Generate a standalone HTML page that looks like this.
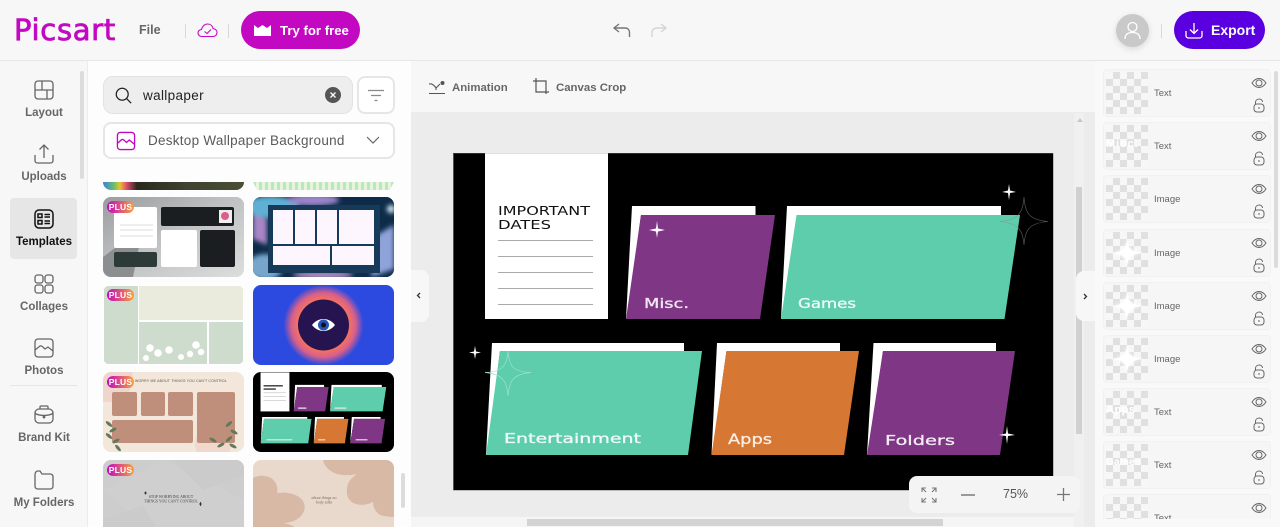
<!DOCTYPE html>
<html><head><meta charset="utf-8">
<style>
*{box-sizing:border-box}
html,body{margin:0;padding:0;width:1280px;height:527px;overflow:hidden;background:#f7f7f7;font-family:"Liberation Sans",sans-serif}
#w{position:relative;width:1280px;height:527px;overflow:hidden}
.a{position:absolute}
.t{position:absolute;white-space:nowrap}
.nav{position:absolute;width:68px;left:10px;text-align:center;font-size:11.5px;font-weight:700;color:#666;line-height:14px}
.th{position:absolute;width:141px;height:80px;border-radius:8px;overflow:hidden}
.th svg{position:absolute;left:0;top:0;filter:blur(.35px)}
.plus{position:absolute;left:4px;top:4px;width:27px;height:12px;border-radius:6px;background:linear-gradient(90deg,#c209c1,#f9a13a);color:#fff;font-size:8.5px;font-weight:700;line-height:12px;text-align:center;letter-spacing:.2px}
.ly{position:absolute;left:1103px;width:168px;height:48px;background:#f6f6f6;border:1px solid #f1f1f1;border-radius:4px}
.ck{position:absolute;left:2px;top:2px;width:42px;height:42px;background-color:#f7f7f7;background-image:linear-gradient(45deg,#e0e0e0 25%,transparent 25%,transparent 75%,#e0e0e0 75%),linear-gradient(45deg,#e0e0e0 25%,transparent 25%,transparent 75%,#e0e0e0 75%);background-size:14px 14px;background-position:0 0,7px 7px}
.lt{position:absolute;left:50px;top:18px;font-size:9.5px;line-height:12px;color:#666}
.lb{position:absolute;left:2px;top:15px;white-space:nowrap;color:#fff;font-weight:700}
.ly>svg{position:absolute;left:146px;top:5px}
.st{position:absolute;left:0;top:0;filter:drop-shadow(0 0 2px #fff)}
</style></head><body><div id="w">

<!-- header -->
<div class="a" style="left:0;top:0;width:1280px;height:61px;background:#f7f7f7;border-bottom:1px solid #e6e6e6"></div>
<div class="t" style="left:14px;top:12px;font-size:29px;line-height:36px;color:#c209c1;letter-spacing:.7px;font-family:'DejaVu Sans',sans-serif;-webkit-text-stroke:.8px #c209c1">Picsart</div>
<div class="t" style="left:139px;top:23px;font-size:12.5px;font-weight:700;color:#666;line-height:15px">File</div>
<div class="a" style="left:185px;top:24px;width:1px;height:14px;background:#d8d8d8"></div>
<svg class="a" style="left:197px;top:22px" width="21" height="16" viewBox="0 0 21 16" fill="none" stroke="#c209c1" stroke-width="1.1"><path d="M5 14.5C2.5 14.5 1 12.800 1 11C1 9 2.400 7.800 4.500 7.500C5 4.500 7.500 2 10.500 2C13.500 2 15.500 4 16 6.500C18.500 7 20 8.600 20 10.600C20 12.800 18.300 14.500 16 14.500Z"/><path d="M7.500 9.500L10 11.500L14 7.500"/></svg>
<div class="a" style="left:228px;top:24px;width:1px;height:14px;background:#d8d8d8"></div>
<div class="a" style="left:241px;top:11px;width:119px;height:38px;border-radius:19px;background:#c209c1"></div>
<svg class="a" style="left:254px;top:25px" width="17" height="11" viewBox="0 0 17 11"><path d="M0 0L4 3L8.500 0L13 3L17 0V11H0Z" fill="#fff"/></svg>
<div class="t" style="left:280px;top:23px;font-size:13.2px;font-weight:700;color:#fff;line-height:16px">Try for free</div>
<svg class="a" style="left:610px;top:20px" width="60" height="20" viewBox="0 0 60 20" fill="none" stroke-width="1.400"><path d="M9 4L4 8L9 12M4 8H15C18 8 19.500 10 19.500 12.500V17" stroke="#777"/><path d="M51 4L56 8L51 12M56 8H47C44 8 42 10 42 12.500V17" stroke="#d5d5d5"/></svg>
<div class="a" style="left:1116px;top:14px;width:33px;height:33px;border-radius:50%;background:#c9c9c9;box-shadow:0 2px 7px rgba(0,0,0,.12)"></div>
<svg class="a" style="left:1122px;top:20px" width="21" height="21" viewBox="0 0 21 21" fill="none" stroke="#fff" stroke-width="1.300"><circle cx="10.500" cy="7" r="4.500"/><path d="M3 19C3 14.500 6 12.500 10.500 12.500C15 12.500 18 14.500 18 19"/></svg>
<div class="a" style="left:1161px;top:24px;width:1px;height:14px;background:#d8d8d8"></div>
<div class="a" style="left:1174px;top:11px;width:91px;height:38px;border-radius:19px;background:#5a00e0"></div>
<svg class="a" style="left:1185px;top:22px" width="18" height="17" viewBox="0 0 18 17" fill="none" stroke="#fff" stroke-width="1.300"><path d="M9 1V11M5 7.500L9 11.500L13 7.500M1 9V13.500C1 15 2 16 3.500 16H14.500C16 16 17 15 17 13.500V9"/></svg>
<div class="t" style="left:1211px;top:22px;font-size:14px;font-weight:700;color:#fff;line-height:17px">Export</div>

<!-- left nav -->
<div class="a" style="left:0;top:61px;width:88px;height:466px;background:#f7f7f7;border-right:1px solid #ececec"></div>
<div class="a" style="left:80px;top:71px;width:4px;height:108px;background:#dcdcdc;border-radius:2px"></div>
<div class="a" style="left:10px;top:198px;width:67px;height:61px;background:#e6e6e6;border-radius:4px"></div>

<svg class="a" style="left:33px;top:79px" width="22" height="22" viewBox="0 0 22 22" fill="none" stroke="#666" stroke-width="1.300"><rect x="2" y="2" width="18" height="18" rx="3"/><path d="M2 11H20M9 2V11M14 11V20"/></svg>
<div class="nav" style="top:106px">Layout</div>
<svg class="a" style="left:33px;top:143px" width="22" height="22" viewBox="0 0 22 22" fill="none" stroke="#666" stroke-width="1.300"><path d="M11 2V15M6.500 6.500L11 2L15.500 6.500M2 12V17.500C2 19 3 20 4.500 20H17.500C19 20 20 19 20 17.500V12"/></svg>
<div class="nav" style="top:170px">Uploads</div>
<svg class="a" style="left:33px;top:208px" width="22" height="22" viewBox="0 0 22 22" fill="none" stroke="#111" stroke-width="1.500"><rect x="2" y="2" width="18" height="18" rx="4"/><rect x="5" y="6" width="4" height="3.500"/><rect x="5" y="12.500" width="4" height="3.500"/><path d="M11.500 6.500H17M11.500 9H17M11.500 13H17M11.500 15.500H17"/></svg>
<div class="nav" style="top:235px;color:#111">Templates</div>
<svg class="a" style="left:33px;top:273px" width="22" height="22" viewBox="0 0 22 22" fill="none" stroke="#666" stroke-width="1.300"><rect x="2" y="2" width="8" height="8" rx="2.500"/><rect x="12" y="2" width="8" height="8" rx="2.500"/><rect x="2" y="12" width="8" height="8" rx="2.500"/><rect x="12" y="12" width="8" height="8" rx="2.500"/></svg>
<div class="nav" style="top:300px">Collages</div>
<svg class="a" style="left:33px;top:337px" width="22" height="22" viewBox="0 0 22 22" fill="none" stroke="#666" stroke-width="1.300"><rect x="2" y="2" width="18" height="18" rx="3"/><path d="M2 13L7 9C9 8 10.500 11 12 12L15 10L20 14"/></svg>
<div class="nav" style="top:364px">Photos</div>
<div class="a" style="left:10px;top:385px;width:67px;height:1px;background:#e6e6e6"></div>
<svg class="a" style="left:33px;top:404px" width="22" height="22" viewBox="0 0 22 22" fill="none" stroke="#666" stroke-width="1.300"><rect x="2" y="5" width="18" height="14" rx="4"/><path d="M7 5V3C7 2.300 7.500 2 8 2H14C14.500 2 15 2.300 15 3V5M2 9.500C7 12 15 12 20 9.500"/><circle cx="11" cy="13" r=".8" fill="#666"/></svg>
<div class="nav" style="top:431px">Brand Kit</div>
<svg class="a" style="left:33px;top:469px" width="22" height="22" viewBox="0 0 22 22" fill="none" stroke="#666" stroke-width="1.300"><path d="M2 6V17C2 19 3 20 5 20H17C19 20 20 19 20 17V8C20 6 19 5 17 5H9L7 2H5C3 2 2 3.500 2 6Z"/></svg>
<div class="nav" style="top:496px">My Folders</div>

<!-- search panel -->
<div class="a" style="left:88px;top:61px;width:323px;height:466px;background:#fdfdfd"></div>
<div class="a" style="left:103px;top:76px;width:250px;height:38px;background:#eeeeee;border:1px solid #e2e2e2;border-radius:10px"></div>
<svg class="a" style="left:115px;top:87px" width="17" height="17" viewBox="0 0 20 20" fill="none" stroke="#222" stroke-width="1.500"><circle cx="8.500" cy="8.500" r="7"/><path d="M13.500 13.500L19 19"/></svg>
<div class="t" style="left:143px;top:88px;font-size:13.500px;letter-spacing:.35px;color:#222;line-height:16px">wallpaper</div>
<div class="a" style="left:325px;top:87px;width:16px;height:16px;border-radius:50%;background:#555"></div>
<svg class="a" style="left:325px;top:87px" width="16" height="16" fill="none" stroke="#fff" stroke-width="1.300"><path d="M5.500 5.500L10.500 10.500M10.500 5.500L5.500 10.500"/></svg>
<div class="a" style="left:357px;top:76px;width:38px;height:38px;background:#fff;border:2px solid #e6e6e6;border-radius:8px"></div>
<svg class="a" style="left:368px;top:89px" width="16" height="13" fill="none" stroke="#888" stroke-width="1.200"><path d="M0 1.500H16M3 6.500H13M6.500 11.500H9.500"/></svg>
<div class="a" style="left:103px;top:122px;width:292px;height:37px;background:#fff;border:2px solid #e6e6e6;border-radius:8px"></div>
<svg class="a" style="left:116px;top:131px" width="20" height="20" viewBox="0 0 21 21" fill="none" stroke="#c209c1" stroke-width="1.400"><rect x="1.500" y="1.500" width="18" height="18" rx="3"/><path d="M1.500 13L6 9C8 8 9.500 11 11 12L14 9.500L19.500 14"/></svg>
<div class="t" style="left:148px;top:133px;font-size:13.500px;color:#5a5a5a;line-height:16px;letter-spacing:.26px">Desktop Wallpaper Background</div>
<svg class="a" style="left:366px;top:136px" width="14" height="9" fill="none" stroke="#666" stroke-width="1.200"><path d="M1 1L7 7L13 1"/></svg>

<!-- thumbs top partial -->
<div class="a" style="left:103px;top:182px;width:141px;height:8px;border-radius:0 0 8px 8px;background:linear-gradient(90deg,#3a7fe0,#6cc06a 8%,#e8c22e 12%,#d84a6a 17%,#2a2a20 24%,#3e4230 60%,#4a4f34 100%)"></div>
<div class="a" style="left:253px;top:182px;width:141px;height:8px;background:repeating-linear-gradient(90deg,#b5e8c4 0 3px,#e8f5d8 3px 6px);clip-path:polygon(0 0,100% 0,97% 100%,3% 100%)"></div>

<div class="th" style="left:103px;top:197px;background:#c5c6c7">
<svg width="141" height="80"><defs><linearGradient id="g1" x1="0" y1="0" x2="1" y2="1"><stop offset="0" stop-color="#9a9c9e"/><stop offset=".45" stop-color="#bfc0c1"/><stop offset="1" stop-color="#dcdddd"/></linearGradient></defs><rect width="141" height="80" fill="url(#g1)"/><path d="M0 60L40 30L30 80H0Z" fill="#8c8e90"/><rect x="11" y="10" width="43" height="41" rx="2" fill="#fff"/><path d="M17 28H50M17 33H50M17 39H50" stroke="#ddd"/><rect x="58" y="10" width="73" height="19" rx="2" fill="#1a1e20"/><rect x="116" y="13" width="13" height="13" fill="#eee"/><circle cx="122" cy="19" r="4" fill="#d9608a"/><rect x="58" y="33" width="36" height="37" rx="2" fill="#fff"/><rect x="97" y="33" width="35" height="37" rx="2" fill="#1a1e20"/><rect x="11" y="55" width="43" height="15" rx="2" fill="#2c3a38"/></svg>
<div class="plus">PLUS</div></div>

<div class="th" style="left:253px;top:197px;background:#0e2c4a">
<svg width="141" height="80"><defs><filter id="b2"><feGaussianBlur stdDeviation="2.500"/></filter></defs><rect width="141" height="80" fill="#0e2c4a"/><g filter="url(#b2)"><ellipse cx="18" cy="10" rx="28" ry="11" fill="#5fb0d4"/><ellipse cx="60" cy="3" rx="26" ry="6" fill="#9a84c8"/><path d="M0 18L14 22V48L0 42Z" fill="#a986c6"/><ellipse cx="12" cy="70" rx="18" ry="13" fill="#76a6cc"/><path d="M124 38L141 28V72L118 80L122 60Z" fill="#8fa3da"/><ellipse cx="70" cy="78" rx="30" ry="4" fill="#b08cc0"/><circle cx="138" cy="12" r="4" fill="#d6ecf6"/></g><rect x="15" y="8" width="112" height="68" fill="#17395a"/><rect x="20" y="13" width="20" height="34" fill="#fef6fe"/><rect x="42" y="13" width="20" height="34" fill="#fef6fe"/><rect x="64" y="13" width="20" height="34" fill="#fef6fe"/><rect x="86" y="13" width="35" height="34" fill="#fef6fe"/><rect x="20" y="49" width="57" height="19" fill="#fef6fe"/><rect x="79" y="49" width="42" height="19" fill="#fef6fe"/></svg></div>

<div class="th" style="left:103px;top:285px;background:#fff">
<svg width="141" height="80"><rect x="1" y="1" width="34" height="78" fill="#cddccd"/><rect x="36" y="1" width="104" height="34" fill="#eaebdd"/><rect x="36" y="37" width="68" height="42" fill="#cddccd"/><rect x="106" y="37" width="34" height="42" fill="#cddccd"/><g fill="#fff"><circle cx="47" cy="63" r="3.800"/><circle cx="55" cy="68" r="3.800"/><circle cx="66" cy="65" r="3.800"/><circle cx="78" cy="72" r="3"/><circle cx="87" cy="69" r="3.200"/><circle cx="93" cy="60" r="3.800"/><circle cx="98" cy="67" r="3.200"/><circle cx="43" cy="73" r="3"/></g></svg>
<div class="plus">PLUS</div></div>

<div class="th" style="left:253px;top:285px;background:#2c4ae0">
<svg width="141" height="80"><defs><radialGradient id="g3"><stop offset=".62" stop-color="#f8745a"/><stop offset=".8" stop-color="#d8608a"/><stop offset="1" stop-color="#2c4ae0"/></radialGradient></defs><circle cx="70.500" cy="40" r="40" fill="url(#g3)"/><circle cx="70.500" cy="40" r="25.500" fill="#251450"/><path d="M59 40C65 32 76 32 82 40C76 48 65 48 59 40Z" fill="#fff"/><circle cx="70.500" cy="40" r="5.500" fill="#2454b8"/><circle cx="70.500" cy="40" r="2.500" fill="#111"/></svg></div>

<div class="th" style="left:103px;top:372px;background:#f3e6db">
<svg width="141" height="80"><circle cx="6" cy="6" r="24" fill="#f0d5cc"/><circle cx="110" cy="72" r="18" fill="#f0d8cd"/><rect x="9" y="20" width="25" height="24" rx="2" fill="#c08f7c"/><rect x="38" y="20" width="24" height="24" rx="2" fill="#c08f7c"/><rect x="65" y="20" width="25" height="24" rx="2" fill="#c08f7c"/><rect x="94" y="20" width="38" height="51" rx="2" fill="#c08f7c"/><rect x="9" y="48" width="81" height="23" rx="2" fill="#c08f7c"/><g fill="#62795a"><ellipse cx="6" cy="52" rx="4" ry="1.600" transform="rotate(40 6 52)"/><ellipse cx="10" cy="58" rx="4" ry="1.600" transform="rotate(-30 10 58)"/><ellipse cx="6" cy="64" rx="4" ry="1.600" transform="rotate(40 6 64)"/><ellipse cx="13" cy="69" rx="4" ry="1.600" transform="rotate(-30 13 69)"/><ellipse cx="15" cy="76" rx="4" ry="1.600" transform="rotate(50 15 76)"/><ellipse cx="126" cy="52" rx="4" ry="1.600" transform="rotate(-40 126 52)"/><ellipse cx="131" cy="60" rx="4" ry="1.600" transform="rotate(30 131 60)"/><ellipse cx="126" cy="67" rx="4" ry="1.600" transform="rotate(-40 126 67)"/><ellipse cx="130" cy="74" rx="4" ry="1.600" transform="rotate(30 130 74)"/><ellipse cx="110" cy="68" rx="4" ry="1.600" transform="rotate(30 110 68)"/><ellipse cx="118" cy="73" rx="4" ry="1.600" transform="rotate(-30 118 73)"/></g></svg>
<div class="plus">PLUS</div><div class="t" style="left:32px;top:7px;font-size:3.500px;color:#553;letter-spacing:.2px">WORRY ME ABOUT THINGS YOU CAN'T CONTROL</div></div>

<div class="th" style="left:253px;top:372px;background:#000">
<svg width="141" height="80" viewBox="453 153 600 337"><rect x="453" y="153" width="600" height="337" fill="#000"/><rect x="485" y="153" width="123" height="166" fill="#fff"/><path d="M498 240H593M498 256H593M498 272H593" stroke="#aaa" stroke-width="2"/><path d="M498 210H580M498 224H550" stroke="#333" stroke-width="6"/><path d="M632 206H755.500V215H641L627 319Z" fill="#fff"/><path d="M641 215H775L760 319H626Z" fill="#7f3685"/><path d="M787 206H1001V215H797L781 319Z" fill="#fff"/><path d="M796.500 215H1020L1004.500 319H781Z" fill="#5ecdac"/><path d="M492 343H684V351H500L486 455Z" fill="#fff"/><path d="M500 351H702L688 455H486Z" fill="#5ecdac"/><path d="M717 343H840V351H726.500L711.500 455Z" fill="#fff"/><path d="M726.500 351H859L844 455H711.500Z" fill="#d77734"/><path d="M873.500 343H996V351H883L867 455Z" fill="#fff"/><path d="M883 351H1015L1000 455H867Z" fill="#7f3685"/><path d="M510 440H620M730 440H760M890 440H940M645 305H680M800 305H850" stroke="#e8e8e8" stroke-width="5"/></svg></div>

<div class="th" style="left:103px;top:460px;background:#cfcfd0">
<svg width="141" height="80"><rect width="141" height="80" fill="#cdcdce"/><path d="M0 30L60 0L141 40V80H60Z" fill="#cfcfd0"/><path d="M70 0L100 30L141 15V0ZM0 60L40 45L60 80H0Z" fill="#cbcbcc"/><text x="68" y="38" text-anchor="middle" font-size="3.800" fill="#444" font-family="Liberation Serif">STOP WORRYING ABOUT</text><text x="68" y="42.500" text-anchor="middle" font-size="3.800" fill="#444" font-family="Liberation Serif">THINGS YOU CAN'T CONTROL</text><path d="M41 33h3M42.500 31.500v3M96 44h3M97.500 42v4" stroke="#222" stroke-width=".8"/></svg>
<div class="plus">PLUS</div></div>

<div class="th" style="left:253px;top:460px;background:#e9d8cc">
<svg width="141" height="80"><path d="M70 0C72 8 78 12 84 14C92 16 100 15 104 14C98 18 94 23 94 29C93 36 96 42 103 44C110 46 116 44 120 42C120 48 124 56 132 56C136 57 139 57 141 57V0Z" fill="#d8b9a6"/><path d="M0 18C5 15 12 15 18 18C24 22 25 28 24 33C32 32 40 33 46 37C52 41 53 48 50 53C46 60 38 63 30 63C36 64 42 66 44 70V80H0Z" fill="#d8b9a6"/><text x="71" y="39" text-anchor="middle" font-size="4" fill="#7c6860" font-family="Liberation Serif" font-style="italic">about things no</text><text x="71" y="43.500" text-anchor="middle" font-size="4" fill="#7c6860" font-family="Liberation Serif" font-style="italic">body talks</text></svg></div>

<div class="a" style="left:401px;top:473px;width:4px;height:35px;background:#dcdcdc;border-radius:2px"></div>

<!-- canvas area -->
<div class="a" style="left:411px;top:61px;width:684px;height:466px;background:#ececec"></div>
<div class="a" style="left:411px;top:61px;width:684px;height:52px;background:#f7f7f7;border-bottom:1px solid #ececec"></div>
<svg class="a" style="left:428px;top:80px" width="18" height="15" fill="none" stroke="#555" stroke-width="1.100"><path d="M1 4C4 3 6 5 8 8C10 6 11 5 12 4M8 8V10M1 13.500H17"/><circle cx="14.500" cy="3" r="2" fill="#555" stroke="none"/></svg>
<div class="t" style="left:452px;top:81px;font-size:11.4px;font-weight:700;color:#666;line-height:14px">Animation</div>
<svg class="a" style="left:532px;top:78px" width="18" height="18" fill="none" stroke="#555" stroke-width="1.200"><path d="M1 3H14V16M4 0V14H17"/></svg>
<div class="t" style="left:556px;top:81px;font-size:11.4px;font-weight:700;color:#666;line-height:14px">Canvas Crop</div>

<!-- design -->
<svg class="a" style="left:453px;top:153px" width="601" height="338" viewBox="453 153 601 338">
<rect x="453" y="153" width="600" height="337" fill="#000"/>
<rect x="485" y="153" width="123" height="166" fill="#fff"/>
<text x="498" y="215" font-family="'DejaVu Sans',sans-serif" font-size="12.500" fill="#111" textLength="92" lengthAdjust="spacingAndGlyphs">IMPORTANT</text>
<text x="498" y="229" font-family="'DejaVu Sans',sans-serif" font-size="12.500" fill="#111" textLength="53" lengthAdjust="spacingAndGlyphs">DATES</text>
<path d="M498 240.500H593M498 256.500H593M498 272.500H593M498 288.500H593M498 304.500H593" stroke="#aaa" stroke-width="1"/>

<path d="M632 206H755.500V215H641L627 319H626Z" fill="#fff"/>
<path d="M641 215H775L760 319H626Z" fill="#7f3685"/>
<path d="M657 221L658 228.500L665 230L658 231.500L657 238L656 231.500L649 230L656 228.500Z" fill="#fff"/>
<text x="644" y="308" font-family="'DejaVu Sans',sans-serif" font-size="13" fill="#f2e8f2" stroke="#f2e8f2" stroke-width=".3" textLength="45" lengthAdjust="spacingAndGlyphs">Misc.</text>

<path d="M787 206H1001V215H797L782 319H781Z" fill="#fff"/>
<path d="M796.500 215H1020L1004.500 319H781Z" fill="#5ecdac"/>
<text x="798" y="308" font-family="'DejaVu Sans',sans-serif" font-size="13" fill="#eefaf5" stroke="#eefaf5" stroke-width=".3" textLength="58" lengthAdjust="spacingAndGlyphs">Games</text>
<path d="M1009 184L1010 190.500L1016 192L1010 193L1009 200L1008 193L1002 192L1008 190.500Z" fill="#fff"/>
<path d="M1024 197C1025 213 1029 220 1048 221.500C1029 223 1025 230 1024 245C1023 230 1018 223 1000 221.500C1018 220 1023 213 1024 197Z" fill="none" stroke="#888" stroke-width=".6" opacity=".7"/>

<path d="M492 343H684V351H500L487 455H486Z" fill="#fff"/>
<path d="M500 351H702L688 455H486Z" fill="#5ecdac"/>
<text x="504" y="443" font-family="'DejaVu Sans',sans-serif" font-size="13" fill="#eefaf5" stroke="#eefaf5" stroke-width=".3" textLength="137" lengthAdjust="spacingAndGlyphs">Entertainment</text>
<path d="M475 346L476 351.500L481 352.500L476 353.500L475 359L474 353.500L469 352.500L474 351.500Z" fill="#fff"/>
<path d="M508 351C509 365 512 372 531 372.500C512 374 509 382 508 396C507 382 503 374 485 372.500C503 372 507 365 508 351Z" fill="none" stroke="#9ee0cb" stroke-width=".7"/>

<path d="M717 343H840V351H726.500L712 455H711.500Z" fill="#fff"/>
<path d="M726.500 351H859L844 455H711.500Z" fill="#d77734"/>
<text x="728" y="444" font-family="'DejaVu Sans',sans-serif" font-size="14" fill="#fbeee4" stroke="#fbeee4" stroke-width=".3" textLength="44" lengthAdjust="spacingAndGlyphs">Apps</text>

<path d="M873.500 343H996V351H883L868 455H867Z" fill="#fff"/>
<path d="M883 351H1015L1000 455H867Z" fill="#7f3685"/>
<text x="885" y="445" font-family="'DejaVu Sans',sans-serif" font-size="13.500" fill="#f4ecf4" stroke="#f4ecf4" stroke-width=".3" textLength="70" lengthAdjust="spacingAndGlyphs">Folders</text>
<path d="M1007 426L1008 433.500L1015 435L1008 436L1007 444L1006 436L999 435L1006 433.500Z" fill="#fff"/>
</svg>
<div class="a" style="left:453px;top:153px;width:601px;height:338px;border:1px solid rgba(150,150,150,.55);border-top-color:rgba(150,150,150,.3)"></div>

<!-- scrollbars -->
<div class="a" style="left:1074px;top:113px;width:10px;height:414px;background:#f0f0f0"></div>
<div class="a" style="left:1076px;top:187px;width:6px;height:247px;background:#d0d0d0"></div>
<div class="a" style="left:1077px;top:118px;width:0;height:0;border-left:3px solid transparent;border-right:3px solid transparent;border-bottom:4px solid #c9c9c9"></div>
<div class="a" style="left:411px;top:517px;width:663px;height:10px;background:#f5f5f5"></div>
<div class="a" style="left:527px;top:519px;width:416px;height:7px;background:#d3d3d3"></div>

<!-- handles -->
<div class="a" style="left:411px;top:270px;width:18px;height:52px;background:#f7f7f7;border-radius:0 8px 8px 0"></div>
<svg class="a" style="left:416px;top:292px" width="6" height="7" fill="none" stroke="#333" stroke-width="1.300"><path d="M4 1L1.500 3.500L4 6"/></svg>
<div class="a" style="left:1076px;top:271px;width:19px;height:50px;background:#f7f7f7;border-radius:8px 0 0 8px"></div>
<svg class="a" style="left:1082px;top:293px" width="6" height="7" fill="none" stroke="#333" stroke-width="1.300"><path d="M2 1L4.500 3.500L2 6"/></svg>

<!-- zoom -->
<div class="a" style="left:909px;top:476px;width:171px;height:37px;background:#f4f4f4;border-radius:8px"></div>
<svg class="a" style="left:921px;top:487px" width="16" height="16" fill="none" stroke="#777" stroke-width="1.100"><path d="M1 5V1H5M1 1L5 5M15 5V1H11M15 1L11 5M1 11V15H5M1 15L5 11M15 11V15H11M15 15L11 11"/></svg>
<div class="a" style="left:961px;top:494px;width:14px;height:2px;background:#999"></div>
<div class="t" style="left:1003px;top:487px;font-size:12.500px;color:#555;line-height:15px">75%</div>
<svg class="a" style="left:1057px;top:488px" width="13" height="13" fill="none" stroke="#777" stroke-width="1.300"><path d="M0 6.500H13M6.500 0V13"/></svg>

<!-- right panel -->
<div class="a" style="left:1095px;top:61px;width:185px;height:466px;background:#f9f9f9"></div>
<div class="a" style="left:1274px;top:71px;width:4px;height:197px;background:#dcdcdc;border-radius:2px"></div>

<div class="ly" style="top:69px"><div class="ck"></div><div class="lt">Text</div><svg width="18" height="38" fill="none" stroke="#666" stroke-width="1"><path d="M2 8C6 2 12 2 16 8C12 14 6 14 2 8Z"/><circle cx="9" cy="8" r="3"/><rect x="4" y="29" width="10" height="8" rx="3"/><path d="M5.500 29V27.500C5.500 23 12.500 23 12.500 27"/><path d="M9 32V34"/></svg></div>
<div class="ly" style="top:122px"><div class="ck"></div><div class="lt">Text</div><div class="lb" style="font-size:11px;letter-spacing:1px">Misc.</div><svg width="18" height="38" fill="none" stroke="#666" stroke-width="1"><path d="M2 8C6 2 12 2 16 8C12 14 6 14 2 8Z"/><circle cx="9" cy="8" r="3"/><rect x="4" y="29" width="10" height="8" rx="3"/><path d="M5.500 29V27.500C5.500 23 12.500 23 12.500 27"/><path d="M9 32V34"/></svg></div>
<div class="ly" style="top:175px"><div class="ck"></div><div class="lt">Image</div><svg width="18" height="38" fill="none" stroke="#666" stroke-width="1"><path d="M2 8C6 2 12 2 16 8C12 14 6 14 2 8Z"/><circle cx="9" cy="8" r="3"/><rect x="4" y="29" width="10" height="8" rx="3"/><path d="M5.500 29V27.500C5.500 23 12.500 23 12.500 27"/><path d="M9 32V34"/></svg></div>
<div class="ly" style="top:229px"><div class="ck"><svg class="st" width="42" height="42"><path d="M21 6C22 17 24 20 38 21C24 22 22 25 21 36C20 25 18 22 4 21C18 20 20 17 21 6Z" fill="#fff"/></svg></div><div class="lt">Image</div><svg width="18" height="38" fill="none" stroke="#666" stroke-width="1"><path d="M2 8C6 2 12 2 16 8C12 14 6 14 2 8Z"/><circle cx="9" cy="8" r="3"/><rect x="4" y="29" width="10" height="8" rx="3"/><path d="M5.500 29V27.500C5.500 23 12.500 23 12.500 27"/><path d="M9 32V34"/></svg></div>
<div class="ly" style="top:282px"><div class="ck"><svg class="st" width="42" height="42"><path d="M21 6C22 17 24 20 38 21C24 22 22 25 21 36C20 25 18 22 4 21C18 20 20 17 21 6Z" fill="#fff"/></svg></div><div class="lt">Image</div><svg width="18" height="38" fill="none" stroke="#666" stroke-width="1"><path d="M2 8C6 2 12 2 16 8C12 14 6 14 2 8Z"/><circle cx="9" cy="8" r="3"/><rect x="4" y="29" width="10" height="8" rx="3"/><path d="M5.500 29V27.500C5.500 23 12.500 23 12.500 27"/><path d="M9 32V34"/></svg></div>
<div class="ly" style="top:335px"><div class="ck"><svg class="st" width="42" height="42"><path d="M21 6C22 17 24 20 38 21C24 22 22 25 21 36C20 25 18 22 4 21C18 20 20 17 21 6Z" fill="#fff"/></svg></div><div class="lt">Image</div><svg width="18" height="38" fill="none" stroke="#666" stroke-width="1"><path d="M2 8C6 2 12 2 16 8C12 14 6 14 2 8Z"/><circle cx="9" cy="8" r="3"/><rect x="4" y="29" width="10" height="8" rx="3"/><path d="M5.500 29V27.500C5.500 23 12.500 23 12.500 27"/><path d="M9 32V34"/></svg></div>
<div class="ly" style="top:388px"><div class="ck"></div><div class="lt">Text</div><div class="lb" style="font-size:11px;letter-spacing:.5px">Apps</div><svg width="18" height="38" fill="none" stroke="#666" stroke-width="1"><path d="M2 8C6 2 12 2 16 8C12 14 6 14 2 8Z"/><circle cx="9" cy="8" r="3"/><rect x="4" y="29" width="10" height="8" rx="3"/><path d="M5.500 29V27.500C5.500 23 12.500 23 12.500 27"/><path d="M9 32V34"/></svg></div>
<div class="ly" style="top:441px"><div class="ck"></div><div class="lt">Text</div><div class="lb" style="font-size:10px;letter-spacing:.3px">Games</div><svg width="18" height="38" fill="none" stroke="#666" stroke-width="1"><path d="M2 8C6 2 12 2 16 8C12 14 6 14 2 8Z"/><circle cx="9" cy="8" r="3"/><rect x="4" y="29" width="10" height="8" rx="3"/><path d="M5.500 29V27.500C5.500 23 12.500 23 12.500 27"/><path d="M9 32V34"/></svg></div>
<div class="ly" style="top:494px"><div class="ck"></div><div class="lt">Text</div><svg width="18" height="38" fill="none" stroke="#666" stroke-width="1"><path d="M2 8C6 2 12 2 16 8C12 14 6 14 2 8Z"/><circle cx="9" cy="8" r="3"/></svg></div>
<div class="a" style="left:1095px;top:519px;width:185px;height:8px;background:#f9f9f9"></div>

</div></body></html>
